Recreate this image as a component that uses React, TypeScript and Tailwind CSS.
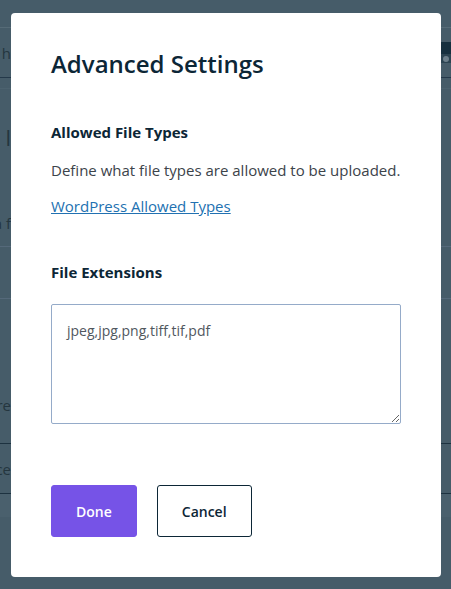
import React from 'react';

function Fragment({ text, size = 'text-[15px]' }: { text: string; size?: string }) {
  return (
    <div className="flex w-[11px] justify-end">
      <span className={`whitespace-nowrap leading-5 text-[#24363f] ${size}`}>{text}</span>
    </div>
  );
}

export default function App() {
  return (
    <div className="relative h-[589px] w-[451px] overflow-hidden bg-[#465c69] font-['Open_Sans',sans-serif]">
      {/* page behind the overlay */}
      <div className="flex flex-col">
        <div className="h-[28px] border-b border-[#566b77]" />
        <div className="flex h-[50px] items-center border-b border-[#24394a]">
          <Fragment text="h" />
        </div>
        <div className="h-[11px] border-b border-[#4c626f]" />
        <div className="flex h-[157px] flex-col justify-between pb-[13px] pt-[38px]">
          <Fragment text="l" size="text-[22px]" />
          <Fragment text="a f" />
        </div>
        <div className="h-[53px] border-y border-[#55697a]" />
        <div className="flex h-[144px] items-end pb-[28px]">
          <Fragment text="re" />
        </div>
        <div className="flex h-[51px] items-center border-y border-[#1d3240]">
          <Fragment text="ce" />
        </div>
        <div className="h-[23px] bg-[#4a606d]" />
      </div>
      <div className="absolute right-0 top-[42px] flex h-[21px] w-[11px] flex-col">
        <div className="h-[12px] bg-[#16303f]" />
        <div className="flex h-[9px] items-center bg-[#2c4452] pl-[3px]">
          <div className="h-[6px] w-[6px] rounded-full bg-[#6d808c]" />
        </div>
      </div>

      {/* modal */}
      <div className="absolute left-[11px] top-[13px] flex h-[564px] w-[430px] flex-col rounded-[4px] bg-white px-10 pt-[35px]">
        <h2 className="text-[24px] font-semibold leading-8 text-[#0c2636]">Advanced Settings</h2>

        <h3 className="mt-[40px] text-[15px] font-bold leading-6 text-[#0c2636]">Allowed File Types</h3>
        <p className="mt-[14px] text-[15px] leading-6 text-[#3c434a]">
          Define what file types are allowed to be uploaded.
        </p>
        <a href="#" className="mt-[12px] self-start text-[15px] leading-6 text-[#2271b1] underline">
          WordPress Allowed Types
        </a>

        <label className="mt-[42px] text-[15px] font-bold leading-6 text-[#0c2636]">File Extensions</label>
        <textarea
          defaultValue="jpeg,jpg,png,tiff,tif,pdf"
          className="mt-[20px] h-[120px] w-full resize-y rounded-[2px] border border-[#95abc9] px-[15px] pt-[16px] text-[14px] leading-5 text-[#50575e] outline-none"
        />

        <div className="mt-[61px] flex gap-5">
          <button className="h-[52px] rounded-[3px] border border-[#7653e7] bg-[#7653e7] px-[24px] text-[14px] font-semibold text-white">
            Done
          </button>
          <button className="h-[52px] rounded-[3px] border border-[#0c2636] bg-white px-[24px] text-[14px] font-semibold text-[#0c2636]">
            Cancel
          </button>
        </div>
      </div>
    </div>
  );
}
